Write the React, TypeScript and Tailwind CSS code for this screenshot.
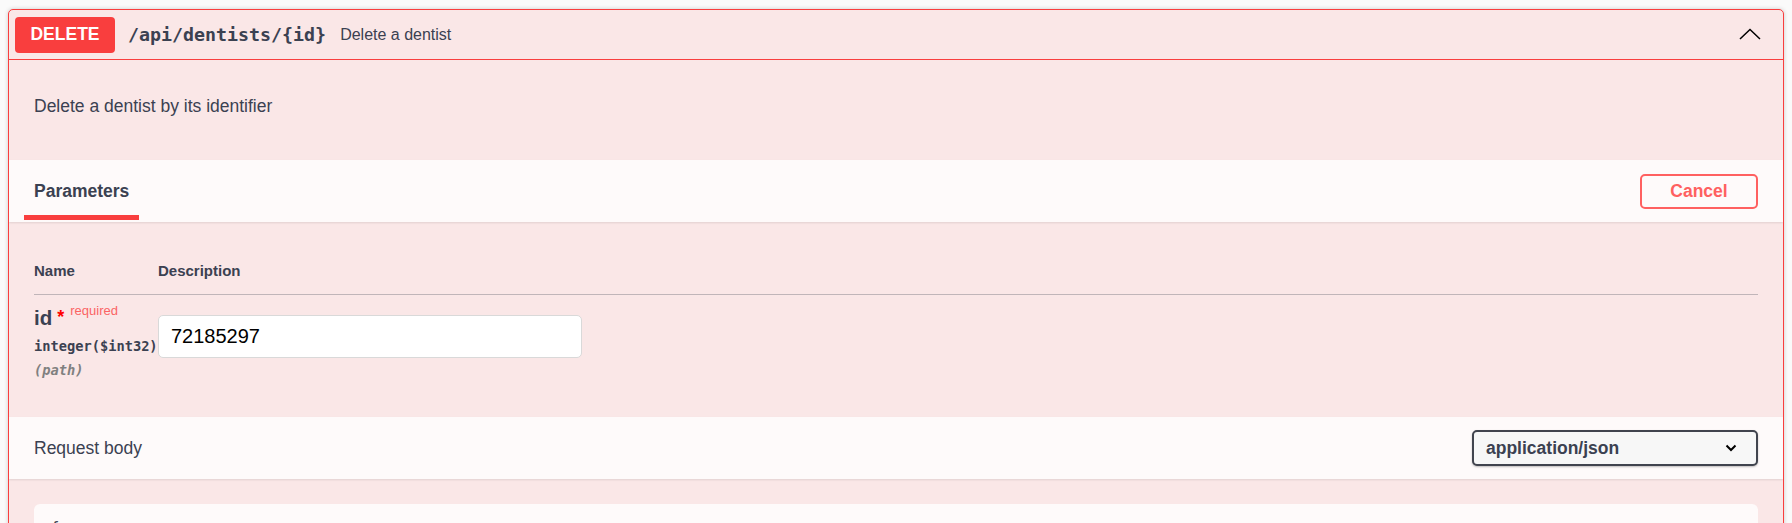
import React from "react";

export default function App() {
  return (
    <div className="min-h-screen bg-[#fafafa] pt-[9px] px-[8px] text-[#3b4151] [font-family:'Liberation_Sans',Arial,sans-serif]">
      <div className="border border-[#f93e3e] rounded-[5px] bg-[#fae7e7] shadow-[0_0_4px_rgba(0,0,0,0.19)] overflow-hidden">
        {/* Summary */}
        <div className="flex items-center h-[50px] px-[6px] border-b border-[#f93e3e]">
          <div className="w-[100px] h-[36px] bg-[#f93e3e] rounded-[4px] text-white font-bold text-[17.5px] flex items-center justify-center">
            DELETE
          </div>
          <span className="ml-[13px] font-semibold text-[18.3px] [font-family:'DejaVu_Sans_Mono',monospace] text-[#3b4151]">
            /api/dentists/{"{id}"}
          </span>
          <span className="ml-[14px] text-[16px] text-[#3b4151]">Delete a dentist</span>
          <div className="flex-1" />
          <svg width="22" height="12" viewBox="0 0 22 12" className="mr-[16px] mb-[2px]">
            <polyline points="1,11 11,1.5 21,11" fill="none" stroke="#000" strokeWidth="1.5" />
          </svg>
        </div>

        {/* Description */}
        <div className="h-[100px] px-[25px] pt-[36px]">
          <p className="text-[17.5px] leading-[20px] text-[#3b4151]">Delete a dentist by its identifier</p>
        </div>

        {/* Parameters header */}
        <div className="h-[62px] bg-[#fefafa] shadow-[0_1px_2px_rgba(0,0,0,0.1)] px-[25px] flex items-center justify-between">
          <div className="relative">
            <h4 className="font-bold text-[17.5px] leading-[20px] text-[#3b4151]">Parameters</h4>
            <div className="absolute left-[-10px] right-[-10px] top-[34px] h-[5px] bg-[#f93e3e]" />
          </div>
          <button className="w-[118px] h-[35px] border-2 border-[#ff6060] rounded-[5px] text-[#ff6060] font-bold text-[17.5px] flex items-center justify-center">
            Cancel
          </button>
        </div>

        {/* Parameters table */}
        <div className="px-[25px] pt-[40px] pb-[37px]">
          <div className="flex items-center pb-[14px] border-b border-[rgba(59,65,81,0.3)] text-[15px] leading-[18px] font-bold text-[#3b4151]">
            <div className="w-[124px]">Name</div>
            <div>Description</div>
          </div>
          <div className="flex items-start">
            <div className="w-[124px] pt-[11px]">
              <div className="flex items-start h-[24px]">
                <span className="text-[20.5px] leading-[24px] font-semibold text-[#3b4151]">id</span>
                <span className="ml-[5px] mt-[2px] text-[18px] leading-[18px] font-bold text-[#ff0000]">*</span>
                <span className="ml-[6px] mt-[-2px] text-[13px] leading-[14px] text-[#fb6464]">required</span>
              </div>
              <div className="mt-[6px] text-[13.7px] leading-[20px] font-bold text-[#3b4151] [font-family:'DejaVu_Sans_Mono',monospace] whitespace-nowrap">
                integer($int32)
              </div>
              <div className="mt-[4px] text-[13.7px] leading-[20px] italic font-semibold text-[#808080] [font-family:'DejaVu_Sans_Mono',monospace]">
                (path)
              </div>
            </div>
            <div className="pt-[20px]">
              <input
                readOnly
                value="72185297"
                className="w-[424px] h-[43px] border border-[#d9d9d9] rounded-[5px] bg-white px-[12px] text-[20px] text-black outline-none [font-family:'Liberation_Sans',Arial,sans-serif]"
              />
            </div>
          </div>
        </div>

        {/* Request body header */}
        <div className="h-[62px] bg-[#fefafa] shadow-[0_1px_2px_rgba(0,0,0,0.1)] px-[25px] flex items-center justify-between">
          <h4 className="text-[17.5px] leading-[20px] text-[#3b4151]">Request body</h4>
          <div className="w-[286px] h-[36px] border-2 border-[#41444e] rounded-[5px] bg-[#f7f7f7] shadow-[0_1px_2px_rgba(0,0,0,0.25)] flex items-center justify-between pl-[12px] pr-[19px]">
            <span className="font-bold text-[17.5px] text-[#3b4151]">application/json</span>
            <svg width="12" height="8" viewBox="0 0 12 8">
              <polyline points="1.5,1.5 6,6 10.5,1.5" fill="none" stroke="#000" strokeWidth="2" />
            </svg>
          </div>
        </div>

        {/* Body */}
        <div className="px-[25px] pt-[25px] pb-[20px]">
          <div className="bg-[#fefafa] rounded-[6px] h-[200px] px-[16px] pt-[14px]">
            <pre className="text-[16px] leading-[20px] text-[#3b4151] [font-family:'DejaVu_Sans_Mono',monospace]">{"{"}</pre>
          </div>
        </div>
      </div>
    </div>
  );
}
